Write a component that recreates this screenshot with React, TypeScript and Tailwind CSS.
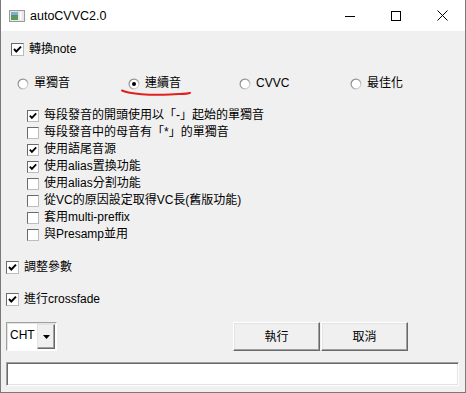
import React from "react";

const FONT = "font-['Liberation_Sans','Noto_Sans_CJK_TC',sans-serif]";

function Tick({ big }: { big?: boolean }) {
  return big ? (
    <svg width="11" height="11" viewBox="0 0 11 11" className="block">
      <polyline points="2,5 4.3,7.5 9,2.6" fill="none" stroke="#000" strokeWidth="1.9" />
    </svg>
  ) : (
    <svg width="10" height="10" viewBox="0 0 10 10" className="block">
      <polyline points="1.8,4.6 3.9,6.9 8.2,2.4" fill="none" stroke="#000" strokeWidth="1.8" />
    </svg>
  );
}

function Box({ checked, big }: { checked?: boolean; big?: boolean }) {
  return (
    <div
      className={
        big
          ? "w-[13px] h-[13px] shrink-0 bg-white border border-t-[#6a6a6a] border-l-[#6a6a6a] border-b-[#bdbdbd] border-r-[#bdbdbd] flex items-center justify-center"
          : "w-[12px] h-[12px] shrink-0 bg-white border border-t-[#6a6a6a] border-l-[#6a6a6a] border-b-[#bdbdbd] border-r-[#bdbdbd] flex items-center justify-center"
      }
    >
      {checked ? <Tick big={big} /> : null}
    </div>
  );
}

function Radio({ checked }: { checked?: boolean }) {
  return (
    <svg width="12" height="12" viewBox="0 0 12 12" className="block shrink-0">
      <defs>
        <linearGradient id="rg" x1="0" y1="0" x2="1" y2="1">
          <stop offset="0" stopColor="#7a7a7a" />
          <stop offset="0.55" stopColor="#a8a8a8" />
          <stop offset="1" stopColor="#f4f4f4" />
        </linearGradient>
      </defs>
      <circle cx="6" cy="6" r="5.5" fill="url(#rg)" />
      <circle cx="6" cy="6" r="4.3" fill="#fff" />
      {checked ? <circle cx="6" cy="6" r="2" fill="#000" /> : null}
    </svg>
  );
}

function CheckRow({ checked, label }: { checked?: boolean; label: string }) {
  return (
    <div className="h-[17px] flex items-center pl-[26px]">
      <Box checked={checked} />
      <span className="ml-[5px] text-[12px] leading-[17px] text-black whitespace-nowrap">{label}</span>
    </div>
  );
}

function RadioItem({ checked, label }: { checked?: boolean; label: string }) {
  return (
    <div className="w-[111px] flex items-center">
      <Radio checked={checked} />
      <span className="ml-[5px] text-[12px] leading-[17px] text-black whitespace-nowrap">{label}</span>
    </div>
  );
}

function Btn({ label }: { label: string }) {
  return (
    <div className="w-[87px] h-[29px] flex items-center justify-center bg-[#f0f0f0] border border-t-[#ffffff] border-l-[#ffffff] border-b-[#696969] border-r-[#696969] shadow-[inset_-1px_-1px_0_#a0a0a0,inset_1px_1px_0_#e3e3e3] text-[12px] text-black">
      {label}
    </div>
  );
}

export default function App() {
  return (
    <div className={`${FONT} w-[466px] h-[393px] bg-white overflow-hidden`}>
      <div className="relative w-[466px] h-[393px] flex flex-col border-l border-r border-b border-[#7a7a7a]">
        {/* title bar */}
        <div className="h-[31px] bg-white flex items-center shrink-0">
          <div className="ml-[8px] mt-[1px]">
            <svg width="16" height="12" viewBox="0 0 16 12" className="block">
              <rect x="0.5" y="0.5" width="15" height="11" fill="#e8e8e8" stroke="#9a9a9a" />
              <rect x="2" y="2" width="7" height="8" fill="#4f8f8a" />
              <rect x="2" y="2" width="7" height="3" fill="#7fb0c8" />
              <rect x="2" y="6" width="7" height="4" fill="#5a9a5a" />
              <rect x="11" y="2" width="1.5" height="8" fill="#ffffff" />
            </svg>
          </div>
          <span className="ml-[5px] text-[12.5px] leading-[16px] text-black">autoCVVC2.0</span>
          <div className="ml-auto flex h-[31px]">
            <div className="w-[46px] flex items-center justify-center">
              <svg width="10" height="10" viewBox="0 0 10 10" className="block">
                <line x1="0" y1="5.5" x2="10" y2="5.5" stroke="#000" strokeWidth="1" />
              </svg>
            </div>
            <div className="w-[46px] flex items-center justify-center">
              <svg width="10" height="10" viewBox="0 0 10 10" className="block">
                <rect x="0.5" y="0.5" width="9" height="9" fill="none" stroke="#000" strokeWidth="1" />
              </svg>
            </div>
            <div className="w-[46px] flex items-center justify-center">
              <svg width="11" height="11" viewBox="0 0 11 11" className="block">
                <line x1="0.5" y1="0.5" x2="10.5" y2="10.5" stroke="#000" strokeWidth="1" />
                <line x1="10.5" y1="0.5" x2="0.5" y2="10.5" stroke="#000" strokeWidth="1" />
              </svg>
            </div>
          </div>
        </div>

        {/* body */}
        <div className="flex-1 bg-[#f0f0f0] flex flex-col relative">
          <div className="mt-[10px] h-[17px] flex items-center pl-[10px]">
            <Box checked big />
            <span className="ml-[5px] text-[12px] leading-[17px] text-black">轉換note</span>
          </div>

          <div className="mt-[17px] h-[17px] flex items-center pl-[16px]">
            <RadioItem label="單獨音" />
            <RadioItem checked label="連續音" />
            <RadioItem label="CVVC" />
            <RadioItem label="最佳化" />
          </div>

          <div className="mt-[15px] flex flex-col">
            <CheckRow checked label="每段發音的開頭使用以「-」起始的單獨音" />
            <CheckRow label="每段發音中的母音有「*」的單獨音" />
            <CheckRow checked label="使用語尾音源" />
            <CheckRow checked label="使用alias置換功能" />
            <CheckRow label="使用alias分割功能" />
            <CheckRow label="從VC的原因設定取得VC長(舊版功能)" />
            <CheckRow label="套用multi-preffix" />
            <CheckRow label="與Presamp並用" />
          </div>

          <div className="mt-[16px] h-[17px] flex items-center pl-[5px]">
            <Box checked big />
            <span className="ml-[5px] text-[12px] leading-[17px] text-black">調整參數</span>
          </div>

          <div className="mt-[15px] h-[17px] flex items-center pl-[5px]">
            <Box checked big />
            <span className="ml-[5px] text-[12px] leading-[17px] text-black">進行crossfade</span>
          </div>

          <div className="mt-[14px] h-[29px] flex items-start pl-[5px]">
            <div className="w-[51px] h-[29px] flex bg-white border border-t-[#a0a0a0] border-l-[#a0a0a0] border-b-white border-r-white shadow-[inset_1px_1px_0_#e3e3e3]">
              <div className="flex-1 pl-[3px] pt-[4px] text-[12px] leading-[16px] text-black">CHT</div>
              <div className="w-[18px] h-[25px] mt-[1px] mr-[1px] flex items-center justify-center bg-[#f0f0f0] border border-t-[#e3e3e3] border-l-[#e3e3e3] border-b-[#696969] border-r-[#696969] shadow-[inset_-1px_-1px_0_#a0a0a0]">
                <svg width="7" height="4" viewBox="0 0 7 4" className="block">
                  <polygon points="0,0 7,0 3.5,4" fill="#000" />
                </svg>
              </div>
            </div>
            <div className="ml-[176px] flex gap-[1px]">
              <Btn label="執行" />
              <Btn label="取消" />
            </div>
          </div>

          <div className="mt-[11px] ml-[5px] w-[453px] h-[24px] bg-white border border-t-[#a0a0a0] border-l-[#a0a0a0] border-b-white border-r-white shadow-[inset_1px_1px_0_#696969,inset_-1px_-1px_0_#e3e3e3]" />

          {/* red hand-drawn underline */}
          <svg
            width="80"
            height="10"
            viewBox="0 0 80 10"
            className="absolute left-[119px] top-[57px] pointer-events-none"
          >
            <path
              d="M2 2.5 C 10 6, 30 7.5, 50 6.5 S 68 5.8, 70 4.8"
              fill="none"
              stroke="#e02020"
              strokeWidth="2"
              strokeLinecap="round"
            />
          </svg>
        </div>
      </div>
    </div>
  );
}
